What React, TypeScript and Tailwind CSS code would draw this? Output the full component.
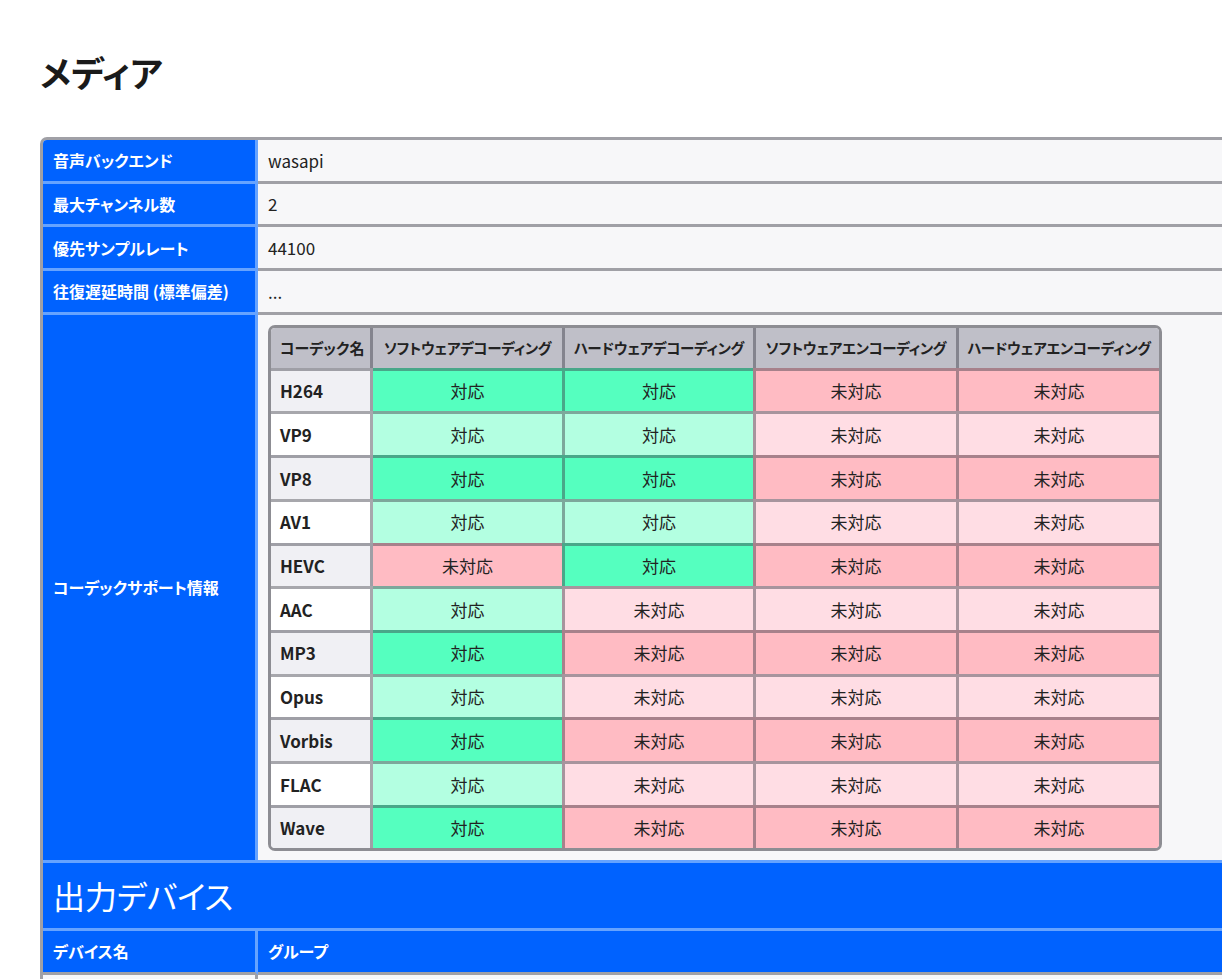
import React from "react";

const FONT =
  "font-['Noto_Sans_CJK_JP','Noto_Sans_CJK_SC',sans-serif] [font-feature-settings:'palt']";

const codecs: [string, number[]][] = [
  ["H264", [1, 1, 0, 0]],
  ["VP9", [1, 1, 0, 0]],
  ["VP8", [1, 1, 0, 0]],
  ["AV1", [1, 1, 0, 0]],
  ["HEVC", [0, 1, 0, 0]],
  ["AAC", [1, 0, 0, 0]],
  ["MP3", [1, 0, 0, 0]],
  ["Opus", [1, 0, 0, 0]],
  ["Vorbis", [1, 0, 0, 0]],
  ["FLAC", [1, 0, 0, 0]],
  ["Wave", [1, 0, 0, 0]],
];

const colW = [
  "w-[189px]",
  "w-[191px] border-l-[3px]",
  "w-[203px] border-l-[3px]",
  "w-[203px] border-l-[3px]",
];

const headers = [
  "ソフトウェアデコーディング",
  "ハードウェアデコーディング",
  "ソフトウェアエンコーディング",
  "ハードウェアエンコーディング",
];

function statusBg(ok: number, strong: boolean) {
  if (ok) return strong ? "bg-[#55ffbf]" : "bg-[#b3ffe1]";
  return strong ? "bg-[#ffbbc3]" : "bg-[#ffdde4]";
}

function CodecTable() {
  return (
    <div className="w-fit border-[3px] border-[#8d8d93] rounded-[7px] overflow-hidden text-[#222]">
      <div className="flex h-[40px] bg-[#bfbfc8]">
        <div className="w-[102px] shrink-0 border-r-[3px] border-[#3c3c4673] flex items-center px-[9px] font-bold text-[15px] whitespace-nowrap">
          コーデック名
        </div>
        {headers.map((h, i) => (
          <div
            key={h}
            className={`${colW[i]} shrink-0 border-[#3c3c4673] flex items-center justify-center font-bold text-[14.5px] tracking-[-0.3px] whitespace-nowrap overflow-hidden`}
          >
            {h}
          </div>
        ))}
      </div>
      {codecs.map(([name, st], r) => {
        const strong = r % 2 === 0;
        return (
          <div key={name} className="flex h-[43.7px]">
            <div
              className={`w-[102px] shrink-0 border-r-[3px] border-t-[3px] border-[#3c3c4673] flex items-center px-[9px] font-bold text-[17px] ${
                strong ? "bg-[#f0f0f4]" : "bg-white"
              }`}
            >
              {name}
            </div>
            {st.map((ok, i) => (
              <div
                key={i}
                className={`${colW[i]} shrink-0 border-t-[3px] border-[#3c3c4673] flex items-center justify-center text-[17px] ${statusBg(
                  ok,
                  strong
                )}`}
              >
                {ok ? "対応" : "未対応"}
              </div>
            ))}
          </div>
        );
      })}
    </div>
  );
}

function InfoRow({ label, value }: { label: string; value: string }) {
  return (
    <div className="flex h-[43.7px]">
      <div className="w-[215px] shrink-0 bg-[#0062ff] text-white font-bold text-[16px] border-r-[3px] border-b-[3px] border-[#66a3ff] flex items-center px-[10px] whitespace-nowrap">
        {label}
      </div>
      <div className="flex-1 bg-[#f7f7f9] border-b-[3px] border-[#a0a0a6] flex items-center px-[10px] text-[17px] text-[#222]">
        {value}
      </div>
    </div>
  );
}

export default function App() {
  return (
    <div className={`w-[1222px] h-[979px] overflow-hidden bg-white ${FONT}`}>
      <div className="pl-[40px] pt-[54px]">
        <h1 className="text-[35px] leading-none font-bold text-[#1a1a1a] h-[35px]">
          メディア
        </h1>
        <div className="mt-[48px] w-[1300px] border-[3px] border-[#a0a0a6] rounded-t-[7px] overflow-hidden">
          <InfoRow label="音声バックエンド" value="wasapi" />
          <InfoRow label="最大チャンネル数" value="2" />
          <InfoRow label="優先サンプルレート" value="44100" />
          <InfoRow label="往復遅延時間 (標準偏差)" value="..." />
          <div className="flex">
            <div className="w-[215px] shrink-0 bg-[#0062ff] text-white font-bold text-[16px] border-r-[3px] border-b-[3px] border-[#66a3ff] flex items-center px-[10px] whitespace-nowrap">
              コーデックサポート情報
            </div>
            <div className="flex-1 bg-[#f7f7f9] border-b-[3px] border-[#66a3ff] pl-[10px] pt-[10px] pb-[8.5px]">
              <CodecTable />
            </div>
          </div>
          <div className="h-[68px] bg-[#0062ff] border-b-[3px] border-[#66a3ff] flex items-center px-[10px] text-white text-[32px] leading-none">
            出力デバイス
          </div>
          <div className="flex h-[43.7px]">
            <div className="w-[215px] shrink-0 bg-[#0062ff] text-white font-bold text-[16px] border-r-[3px] border-[#66a3ff] border-b-[3px] border-b-[#a0a0a6] flex items-center px-[10px]">
              デバイス名
            </div>
            <div className="flex-1 bg-[#0062ff] text-white font-bold text-[16px] border-b-[3px] border-[#a0a0a6] flex items-center px-[10px]">
              グループ
            </div>
          </div>
          <div className="flex h-[43.7px]">
            <div className="w-[215px] shrink-0 bg-[#f7f7f9] border-r-[3px] border-[#a0a0a6]" />
            <div className="flex-1 bg-[#f7f7f9]" />
          </div>
        </div>
      </div>
    </div>
  );
}
